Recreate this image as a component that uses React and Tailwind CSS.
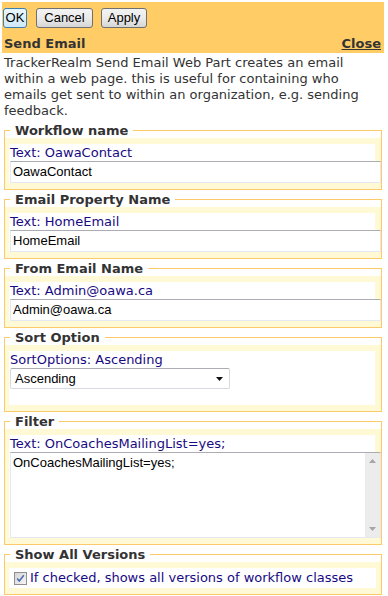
const VERDANA = "font-['DejaVu_Sans',Verdana,sans-serif]";
const ARIAL = "font-['Liberation_Sans',Arial,sans-serif]";

const TEXT_FIELDS = [
  { legend: 'Workflow name', label: 'Text: OawaContact', value: 'OawaContact' },
  { legend: 'Email Property Name', label: 'Text: HomeEmail', value: 'HomeEmail' },
  { legend: 'From Email Name', label: 'Text: Admin@oawa.ca', value: 'Admin@oawa.ca' },
];

function Fieldset({ legend, children, first }) {
  return (
    <fieldset className={`${first ? 'mt-[4px]' : 'mt-[2px]'} ml-[4px] w-[378px] border border-[#fcca6b] bg-white p-0`}>
      <legend className={`ml-[5px] px-[5px] text-[13px] leading-[15px] font-bold text-[#333] ${VERDANA}`}>
        {legend}
      </legend>
      <div className="bg-[#fff9d6] pl-[4px] py-[6px]">{children}</div>
    </fieldset>
  );
}

function Label({ children }) {
  return <div className={`h-[17px] text-[13px] leading-[17px] text-[#180a82] pl-[1px] ${VERDANA}`}>{children}</div>;
}

function Btn({ children, focus, cls }) {
  return (
    <button
      className={`block h-[20px] ${cls} rounded-[3px] border text-[13px] leading-[18px] text-black ${ARIAL} ${
        focus
          ? 'border-[#3c7fb1] bg-gradient-to-b from-[#eaf6fd] to-[#cfe9f8]'
          : 'border-[#707070] bg-gradient-to-b from-[#f3f3f3] via-[#ebebeb] to-[#d6d6d6]'
      }`}
    >
      {children}
    </button>
  );
}

export default function App() {
  return (
    <div className="w-[388px] h-[596px] overflow-hidden bg-white pt-[2px]">
      <div className="ml-[2px] w-[382px] h-[51px] bg-[#ffcc66] pt-[6px]">
        <div className="flex items-start pl-[1px]">
          <Btn focus cls="w-[24px]">OK</Btn>
          <Btn cls="ml-[9px] w-[57px]">Cancel</Btn>
          <Btn cls="ml-[8px] w-[46px]">Apply</Btn>
        </div>
        <div className={`mt-[8px] flex justify-between pl-[2px] pr-[3px] text-[13px] leading-[16px] font-bold text-[#333] ${VERDANA}`}>
          <span>Send Email</span>
          <span className="underline">Close</span>
        </div>
      </div>

      <div className={`mt-[2px] px-[4px] text-[13px] leading-[16px] text-[#333] whitespace-nowrap ${VERDANA}`}>
        TrackerRealm Send Email Web Part creates an email<br />
        within a web page. this is useful for containing who<br />
        emails get sent to within an organization, e.g. sending<br />
        feedback.
      </div>

      {TEXT_FIELDS.map((f, i) => (
        <Fieldset key={f.legend} legend={f.legend} first={i === 0}>
          <div className="w-[366px] bg-white">
            <Label>{f.label}</Label>
            <div
              className={`ml-[1px] w-[371px] h-[22px] border border-[#e3e9ef] border-t-[#abadb3] bg-white pl-[2px] text-[13px] leading-[20px] text-black ${ARIAL}`}
            >
              {f.value}
            </div>
          </div>
        </Fieldset>
      ))}

      <Fieldset legend="Sort Option">
        <div className="w-[366px] h-[54px] bg-white">
          <Label>SortOptions: Ascending</Label>
          <div
            className={`ml-[1px] w-[220px] h-[21px] flex items-center justify-between border border-[#d6d9de] border-t-[#abadb3] rounded-[2px] bg-white pl-[4px] pr-[6px] text-[13px] text-black ${ARIAL}`}
          >
            <span>Ascending</span>
            <svg width="7" height="4" viewBox="0 0 7 4"><path d="M0 0h7L3.5 4z" fill="#111" /></svg>
          </div>
        </div>
      </Fieldset>

      <Fieldset legend="Filter">
        <div className="w-[366px] bg-white">
          <Label>Text: OnCoachesMailingList=yes;</Label>
          <div className="ml-[1px] w-[371px] h-[86px] flex border border-[#e3e9ef] border-t-[#abadb3] bg-white">
            <div className={`flex-1 pl-[2px] pt-[2px] text-[13px] leading-[16px] text-black ${ARIAL}`}>
              OnCoachesMailingList=yes;
            </div>
            <div className="w-[15px] bg-[#ececec] flex flex-col justify-between items-center py-[6px]">
              <svg width="7" height="4" viewBox="0 0 7 4"><path d="M0 4h7L3.5 0z" fill="#a6a6a6" /></svg>
              <svg width="7" height="4" viewBox="0 0 7 4"><path d="M0 0h7L3.5 4z" fill="#a6a6a6" /></svg>
            </div>
          </div>
        </div>
      </Fieldset>

      <Fieldset legend="Show All Versions">
        <div className={`w-[367px] h-[20px] bg-white flex items-center pl-[5px] text-[13px] text-[#180a82] ${VERDANA}`}>
          <div className="w-[13px] h-[13px] border border-[#8f8f8f] bg-gradient-to-br from-[#d4d4d4] to-[#f6f6f6] flex items-center justify-center">
            <svg width="9" height="9" viewBox="0 0 9 9">
              <path d="M1.2 4.6l2.1 2.4L7.8 1.2" fill="none" stroke="#4a6aae" strokeWidth="1.5" />
            </svg>
          </div>
          <span className="ml-[3px]">If checked, shows all versions of workflow classes</span>
        </div>
      </Fieldset>
    </div>
  );
}
